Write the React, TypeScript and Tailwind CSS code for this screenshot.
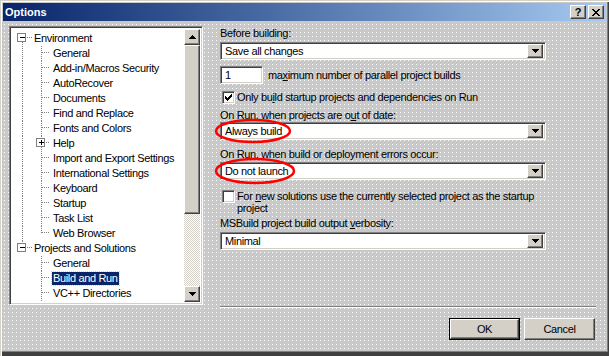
const raised =
  "border border-t-white border-l-white border-r-[#404040] border-b-[#404040] shadow-[inset_-1px_-1px_0_#808080] bg-[#d4d0c8]";
const sunken =
  "border border-t-[#808080] border-l-[#808080] border-r-white border-b-white shadow-[inset_1px_1px_0_#404040,inset_-1px_-1px_0_#d4d0c8]";

type Row = {
  label: string;
  level: 0 | 1;
  box?: "-" | "+";
  rootLine?: "down" | "up" | "full" | "none";
  childLine?: "full" | "half";
  selected?: boolean;
};

const rows: Row[] = [
  { label: "Environment", level: 0, box: "-", rootLine: "down" },
  { label: "General", level: 1, rootLine: "full", childLine: "full" },
  { label: "Add-in/Macros Security", level: 1, rootLine: "full", childLine: "full" },
  { label: "AutoRecover", level: 1, rootLine: "full", childLine: "full" },
  { label: "Documents", level: 1, rootLine: "full", childLine: "full" },
  { label: "Find and Replace", level: 1, rootLine: "full", childLine: "full" },
  { label: "Fonts and Colors", level: 1, rootLine: "full", childLine: "full" },
  { label: "Help", level: 1, box: "+", rootLine: "full", childLine: "full" },
  { label: "Import and Export Settings", level: 1, rootLine: "full", childLine: "full" },
  { label: "International Settings", level: 1, rootLine: "full", childLine: "full" },
  { label: "Keyboard", level: 1, rootLine: "full", childLine: "full" },
  { label: "Startup", level: 1, rootLine: "full", childLine: "full" },
  { label: "Task List", level: 1, rootLine: "full", childLine: "full" },
  { label: "Web Browser", level: 1, rootLine: "full", childLine: "half" },
  { label: "Projects and Solutions", level: 0, box: "-", rootLine: "up" },
  { label: "General", level: 1, rootLine: "none", childLine: "full" },
  { label: "Build and Run", level: 1, rootLine: "none", childLine: "full", selected: true },
  { label: "VC++ Directories", level: 1, rootLine: "none", childLine: "full" },
];

const dot = { stroke: "#808080", strokeWidth: 1, strokeDasharray: "1 1", shapeRendering: "crispEdges" as const };

function Box({ cx, sign }: { cx: number; sign: "-" | "+" }) {
  return (
    <g shapeRendering="crispEdges">
      <rect x={cx - 4.5} y={2.5} width={8} height={8} fill="#fff" stroke="#808080" />
      <line x1={cx - 2} y1={6.5} x2={cx + 3} y2={6.5} stroke="#000" />
      {sign === "+" && <line x1={cx + 0.5} y1={4} x2={cx + 0.5} y2={9} stroke="#000" />}
    </g>
  );
}

function Gutter({ r }: { r: Row }) {
  return (
    <svg width="40" height="15" className="shrink-0">
      {r.rootLine === "full" && <line x1={10.5} y1={0} x2={10.5} y2={15} {...dot} />}
      {r.rootLine === "down" && <line x1={10.5} y1={11} x2={10.5} y2={15} {...dot} />}
      {r.rootLine === "up" && <line x1={10.5} y1={0} x2={10.5} y2={2} {...dot} />}
      {r.level === 0 && <line x1={15} y1={6.5} x2={20} y2={6.5} {...dot} />}
      {r.level === 0 && r.box && <Box cx={10} sign={r.box} />}
      {r.level === 1 && r.childLine === "full" && !r.box && (
        <line x1={29.5} y1={0} x2={29.5} y2={15} {...dot} />
      )}
      {r.level === 1 && r.childLine === "half" && <line x1={29.5} y1={0} x2={29.5} y2={7} {...dot} />}
      {r.level === 1 && r.box && (
        <>
          <line x1={29.5} y1={0} x2={29.5} y2={2} {...dot} />
          <line x1={29.5} y1={11} x2={29.5} y2={15} {...dot} />
          <line x1={34} y1={6.5} x2={38} y2={6.5} {...dot} />
          <Box cx={29} sign={r.box} />
        </>
      )}
      {r.level === 1 && !r.box && <line x1={30} y1={6.5} x2={38} y2={6.5} {...dot} />}
    </svg>
  );
}

function Arrow({ up }: { up?: boolean }) {
  return (
    <svg width="7" height="4" shapeRendering="crispEdges">
      <path d={up ? "M3 0h1v1h1v1h1v1h1v1H0V3h1V2h1V1h1z" : "M0 0h7v1H6v1H5v1H4v1H3V3H2V2H1V1H0z"} fill="#000" />
    </svg>
  );
}

function Tree() {
  return (
    <div className={`${sunken} w-[194px] h-[279px] bg-white flex p-[2px]`}>
      <div className="flex-1 overflow-hidden pt-[2px]">
        {rows.map((r, i) => (
          <div key={i} className="flex h-[15px] items-center">
            <Gutter r={r} />
            <span
              className={`leading-[13px] px-[1px] whitespace-nowrap ${
                r.level === 0 ? "-ml-[19px]" : ""
              } ${r.selected ? "bg-[#0a246a] text-white outline-1 outline-dotted outline-[#d4d0c8]" : ""}`}
            >
              {r.label}
            </span>
          </div>
        ))}
      </div>
      <div className="w-[16px] flex flex-col">
        <div className={`${raised} h-[16px] flex items-center justify-center`}>
          <Arrow up />
        </div>
        <div className={`${raised} h-[169px]`} />
        <div className="flex-1 bg-[repeating-conic-gradient(#ffffff_0%_25%,#d4d0c8_0%_50%)] bg-[length:2px_2px]" />
        <div className={`${raised} h-[16px] flex items-center justify-center`}>
          <Arrow />
        </div>
      </div>
    </div>
  );
}

function Combo({ value }: { value: string }) {
  return (
    <div className={`${sunken} h-[18px] w-[326px] bg-white flex items-center p-[2px]`}>
      <span className="flex-1 pl-[2px] leading-[13px]">{value}</span>
      <div className={`${raised} w-[16px] h-[14px] flex items-center justify-center`}>
        <Arrow />
      </div>
    </div>
  );
}

function Check({ on }: { on?: boolean }) {
  return (
    <div className={`${sunken} w-[13px] h-[13px] bg-white shrink-0 flex items-center justify-center`}>
      {on && (
        <svg width="7" height="7" shapeRendering="crispEdges">
          <path d="M6 0h1v3H6v1H5v1H4v1H3v1H2V6H1V5H0V2h1v1h1v1h1V3h1V2h1V1h1z" fill="#000" />
        </svg>
      )}
    </div>
  );
}

export default function App() {
  return (
    <div className="relative w-[609px] h-[356px] overflow-hidden bg-[#c9c9c9] bg-[conic-gradient(at_1px_1px,#0000_75%,#ffffff_0)] bg-[length:4px_4px] text-black text-[11px] tracking-[-0.35px] font-['Liberation_Sans',Arial,sans-serif] flex flex-col shadow-[inset_1px_1px_0_#d4d0c8,inset_2px_2px_0_#ffffff,inset_-1px_-4px_0_#404040,inset_-2px_-5px_0_#808080]">
      <div className="mx-[3px] mt-[3px] h-[18px] bg-linear-to-r from-[#0a246a] to-[#a6caf0] flex items-center pl-[2px] pr-[2px]">
        <span className="text-white font-bold text-[11px] tracking-normal">Options</span>
        <div className="ml-auto flex gap-[2px]">
          <div className={`${raised} w-[16px] h-[14px] flex items-center justify-center font-bold text-[11px] leading-none tracking-normal`}>
            ?
          </div>
          <div className={`${raised} w-[16px] h-[14px] flex items-center justify-center`}>
            <svg width="8" height="7" shapeRendering="crispEdges">
              <path d="M0 0h2v1h1v1h2V1h1V0h2v1H7v1H6v1H5v1h1v1h1v1h1v1H6V6H5V5H3v1H2v1H0V6h1V5h1V4h1V3H2V2H1V1H0z" fill="#000" />
            </svg>
          </div>
        </div>
      </div>

      <div className="flex pt-[5px] pl-[9px]">
        <Tree />
        <div className="ml-[17px] flex flex-col">
          <div className="mt-[1px] leading-[13px]">Before building:</div>
          <div className="mt-[2px]">
            <Combo value="Save all changes" />
          </div>
          <div className="mt-[6px] flex items-center">
            <div className={`${sunken} w-[43px] h-[18px] bg-white flex items-center pl-[4px]`}>1</div>
            <span className="ml-[5px]">
              ma<u>x</u>imum number of parallel project builds
            </span>
          </div>
          <div className="mt-[7px] flex items-center ml-[2px] h-[13px]">
            <Check on />
            <span className="ml-[2px]">
              Only bu<u>i</u>ld startup projects and dependencies on Run
            </span>
          </div>
          <div className="mt-[5px] leading-[13px]">
            On R<u>u</u>n, when projects are o<u>u</u>t of date:
          </div>
          <Combo value="Always build" />
          <div className="mt-[8px] leading-[13px]">
            On R<u>u</u>n, when build or deployment errors occur:
          </div>
          <div className="mt-[1px]">
            <Combo value="Do not launch" />
          </div>
          <div className="mt-[10px] flex ml-[2px]">
            <Check />
            <span className="ml-[2px] leading-[12px]">
              For <u>n</u>ew solutions use the currently selected project as the startup
              <br />
              project
            </span>
          </div>
          <div className="mt-[3px] leading-[13px]">
            MSBuild project build output <u>v</u>erbosity:
          </div>
          <div className="mt-[2px]">
            <Combo value="Minimal" />
          </div>
        </div>
      </div>

      <div className="mt-px ml-[220px] w-[376px] h-[2px] border-t border-t-[#808080] border-b border-b-white" />

      <div className="mt-[10px] flex justify-end gap-[4px] pr-[14px]">
        <div className="border border-black">
          <div className={`${raised} w-[69px] h-[20px] flex items-center justify-center`}>OK</div>
        </div>
        <div className={`${raised} w-[71px] h-[22px] flex items-center justify-center`}>Cancel</div>
      </div>

      <svg className="absolute left-0 top-0 pointer-events-none" width="609" height="356">
        <ellipse cx="253" cy="131" rx="37" ry="11" fill="none" stroke="#ff0000" strokeWidth="2.5" />
        <ellipse cx="255" cy="171" rx="39" ry="12" fill="none" stroke="#ff0000" strokeWidth="2.5" />
      </svg>
    </div>
  );
}
